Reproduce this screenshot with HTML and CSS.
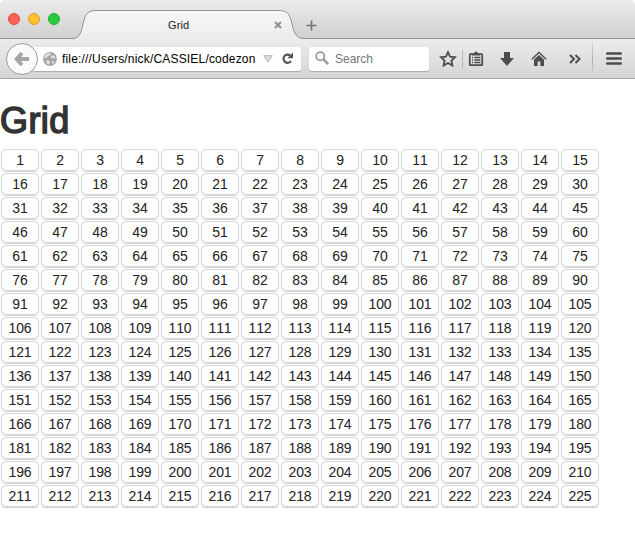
FILE: index.html
```html
<!DOCTYPE html>
<html lang="en">
<head>
<meta charset="utf-8">
<title>Grid</title>
<link rel="stylesheet" href="styles.css">
</head>
<body>
<header class="tabstrip">
  <div class="lights"><i class="light red"></i><i class="light yellow"></i><i class="light green"></i></div>
  <div class="tab">
    <svg class="tab-shape" width="232" height="30" viewBox="0 0 232 30">
      <defs><linearGradient id="tabfill" x1="0" y1="0" x2="0" y2="1"><stop offset="0" stop-color="#f7f7f7"/><stop offset="1" stop-color="#ececec"/></linearGradient></defs>
      <path d="M0 28.5C7 28.5 9 24 11 14C13 4 16 .5 24 .5H207C215 .5 218 4 220 14C222 24 225 28.5 232 28.5V30H0Z" fill="url(#tabfill)"/>
      <path d="M0 28.5C7 28.5 9 24 11 14C13 4 16 .5 24 .5H207C215 .5 218 4 220 14C222 24 225 28.5 232 28.5" fill="none" stroke="#929292"/>
    </svg>
    <span class="tab-title">Grid</span>
    <svg class="tab-close" width="8" height="8" viewBox="0 0 8 8"><path d="M1 1L7 7M7 1L1 7" stroke="#929292" stroke-width="2.1"/></svg>
  </div>
  <svg class="new-tab" width="11" height="11" viewBox="0 0 11 11"><path d="M5.5 .5V10.5M.5 5.5H10.5" stroke="#747474" stroke-width="1.7"/></svg>
</header>
<nav class="toolbar">
  <div class="back"><svg width="16" height="16" viewBox="0 0 16 16"><path d="M8 2L2.5 8L8 14M3 8H15" fill="none" stroke="#a4a4a4" stroke-width="3.8"/></svg></div>
  <div class="urlbar">
    <svg class="globe" width="14" height="14" viewBox="0 0 14 14"><circle cx="7" cy="7" r="6.9" fill="#a4a4a4"/><path d="M5 1L8 1.2L7 3.4L4.5 4L4 6L1.4 6.5L2 3.2ZM9.5 3L12 4.5L12.5 7L10.2 6L8.4 6.8L7.6 5ZM2.5 9L5 8L7.2 9.5L6 12.4L4.4 12ZM9.5 9L12 9.5L10 12L8.8 11Z" fill="#e0e0e0"/></svg>
    <span class="url">file:///Users/nick/CASSIEL/codezon</span>
    <svg class="drop" width="10" height="8" viewBox="0 0 10 8"><path d="M.7 .7H9.3L5 7Z" fill="#ddd" stroke="#b6b6b6"/></svg>
    <svg class="reload" width="13" height="13" viewBox="0 0 13 13"><path d="M9.3 3.6A4.1 4.1 0 1 0 10 9" fill="none" stroke="#555" stroke-width="2.2"/><path d="M12 .6V6.2H6.4Z" fill="#555"/></svg>
  </div>
  <div class="search">
    <svg width="15" height="15" viewBox="0 0 15 15"><circle cx="5.3" cy="5.3" r="4.1" fill="none" stroke="#999" stroke-width="1.8"/><path d="M8.4 8.4L13.2 13.2" stroke="#999" stroke-width="2.5"/></svg>
    <span>Search</span>
  </div>
  <div class="tools">
    <svg width="18" height="18" viewBox="0 0 18 18"><path d="M9 2.2L11.1 6.7L16 7.2L12.4 10.5L13.4 15.5L9 13L4.6 15.5L5.6 10.5L2 7.2L6.9 6.7Z" fill="none" stroke="#4d4d4d" stroke-width="1.8"/></svg>
    <i class="line short"></i>
    <svg class="clip" width="16" height="16" viewBox="0 0 16 16"><path d="M2.4 3.2H13.6Q14.2 3.2 14.2 4V13.5Q14.2 14.2 13.4 14.2H2.6Q1.8 14.2 1.8 13.5V4Q1.8 3.2 2.4 3.2Z" fill="none" stroke="#4d4d4d" stroke-width="1.8"/><path d="M4 4.4V3L6 2L8 .3L10 2L12 3V4.4Z" fill="#4d4d4d"/><path d="M4 6.5H5.2M6.4 6.5H12.3M4 9H5.2M6.4 9H12.3M4 11.5H5.2M6.4 11.5H12.3" stroke="#4d4d4d" stroke-width="1.3"/></svg>
    <svg class="down" width="16" height="16" viewBox="0 0 16 16"><path d="M5 1H11V7H15L8 15L1 7H5Z" fill="#4d4d4d"/></svg>
    <svg class="home" width="16" height="16" viewBox="0 0 16 16"><path d="M.8 8.2L8 1.5L15.2 8.2" fill="none" stroke="#4d4d4d" stroke-width="1.4"/><path d="M3 8.5L8 4L13 8.5V15H9.4V10.5H6.6V15H3Z" fill="#4d4d4d"/></svg>
    <svg class="more" width="12" height="10" viewBox="0 0 12 10"><path d="M1 1L5 5L1 9M6.5 1L10.5 5L6.5 9" fill="none" stroke="#4d4d4d" stroke-width="2"/></svg>
    <i class="line tall"></i>
    <svg class="menu" width="16" height="13" viewBox="0 0 16 13"><path d="M1.2 1.5H14.8M1.2 6.5H14.8M1.2 11.5H14.8" stroke="#4d4d4d" stroke-width="2.6" stroke-linecap="round"/></svg>
  </div>
</nav>
<main>
  <h1>Grid</h1>
  <div class="grid" id="grid"></div>
</main>
<script src="script.js"></script>
</body>
</html>
```
FILE: styles.css
```css
* { box-sizing: border-box; }
body { margin: 0; width: 635px; height: 537px; overflow: hidden; background: #fff; color: #333; font-family: "Liberation Sans", Arial, sans-serif; font-kerning: none; }
svg { display: block; flex: none; }
.tabstrip { display: flex; height: 39px; border-bottom: 1px solid #929292; border-radius: 5px 5px 0 0; background: linear-gradient(#ebebeb, #d1d1d1); }
.lights { display: flex; gap: 8px; padding: 13px 0 0 8px; width: 72px; flex: none; }
.light { width: 12px; height: 12px; border-radius: 50%; flex: none; }
.red { background: #ff6159; border: 1px solid #e2463f; }
.yellow { background: #ffbf2f; border: 1px solid #dfa023; }
.green { background: #25cc3e; border: 1px solid #1dad2b; }
.tab { position: relative; width: 232px; height: 30px; margin-top: 10px; display: flex; flex: none; }
.tab-shape { position: absolute; left: 0; top: 0; }
.tab-title { position: relative; width: 22px; margin: 8px 0 0 96px; font-size: 11px; line-height: 14px; color: #222; letter-spacing: .15px; }
.tab-close { position: relative; margin: 11px 0 0 84px; }
.new-tab { margin: 20px 0 0 2px; }
.toolbar { display: flex; align-items: center; height: 40px; padding-left: 6px; border-bottom: 1px solid #a6a6a6; background: linear-gradient(#ececec, #d5d5d5); }
.back { position: relative; z-index: 1; display: flex; align-items: center; justify-content: center; width: 32px; height: 32px; flex: none; border: 1px solid #9b9b9b; border-radius: 50%; background: #fafafa; }
.urlbar, .search { display: flex; align-items: center; height: 24px; flex: none; background: #fff; border-radius: 3px; box-shadow: 0 1px 1px #aaa; }
.urlbar { width: 269px; margin-left: -6px; padding-left: 11px; }
.url { width: 194px; margin-left: 5px; padding-top: 1px; color: #000; font-size: 12px; line-height: 16px; white-space: nowrap; letter-spacing: .18px; }
.drop { margin-left: 7px; }
.reload { margin-left: 8px; }
.search { width: 120px; margin-left: 8px; padding-left: 6px; color: #777; font-size: 12px; }
.search span { margin-left: 5px; padding-top: 1px; }
.tools { display: flex; align-items: center; padding-left: 10px; }
.line { width: 1px; flex: none; background: #b5b5b5; }
.short { height: 18px; margin-left: 5px; }
.tall { height: 34px; margin-left: 11px; background: linear-gradient(#d9dde1, #a7afb8, #d0d4d8); }
.clip { margin-left: 5px; }
.down { margin-left: 15px; }
.home { margin-left: 16px; }
.more { margin-left: 22px; }
.menu { margin-left: 13px; }
h1 { margin: 22px 0 8px; font-size: 36px; line-height: 40px; font-weight: 400; letter-spacing: .4px; color: #333; -webkit-text-stroke: 1.5px #333; }
.grid { display: grid; grid-template-columns: repeat(15, 38px); grid-auto-rows: 22px; gap: 2px; padding-left: 1px; }
.cell { height: 22px; border: 1px solid #d9d9d9; border-radius: 5px; box-shadow: 0 1px 1px #ccc, inset 0 0 1px #ccc; text-align: center; font-size: 14px; line-height: 20px; letter-spacing: -.1px; color: #222; }
```
FILE: script.js
```js
const grid = document.getElementById("grid");
for (let n = 1; n <= 225; n++) {
  const cell = document.createElement("div");
  cell.className = "cell";
  cell.textContent = n;
  grid.append(cell);
}
```
